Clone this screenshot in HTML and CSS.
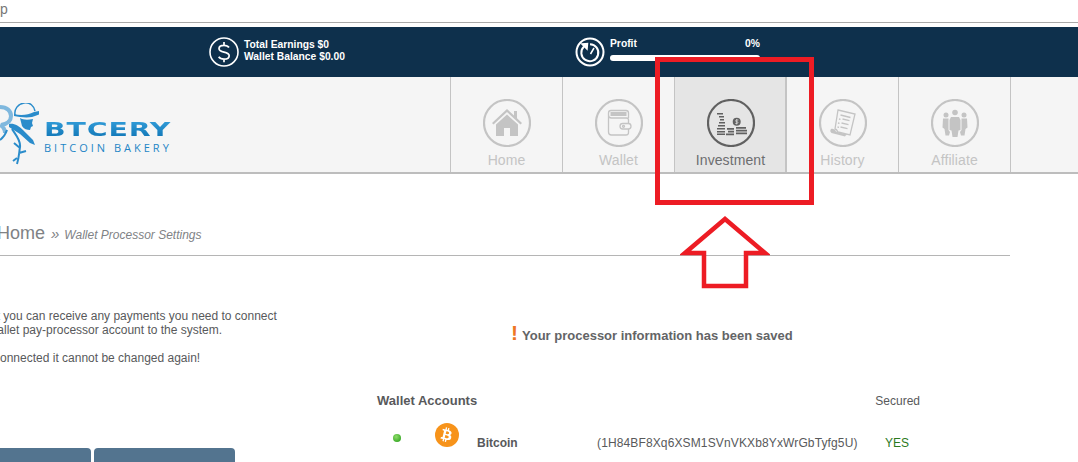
FILE: index.html
```html
<!DOCTYPE html>
<html lang="en">
<head>
<meta charset="utf-8">
<title>Btcery</title>
<link rel="stylesheet" href="styles.css">
</head>
<body>
<div class="urlbar"><span class="urltext">p</span></div>
<div class="statbar">
  <div class="stat stat-money">
    <svg class="stat-ico" viewBox="0 0 30 30"><circle cx="15" cy="15" r="14" fill="none" stroke="#fff" stroke-width="1.6"/><path d="M20 10.500c-1-1.600-2.600-2.200-5-2.200-3 0-5 1.300-5 3.300 0 2.300 2.200 3 5 3.500 2.900.6 5.200 1.300 5.200 3.600 0 2.100-2.100 3.400-5.200 3.400-2.500 0-4.300-.8-5.300-2.300M15 5v3.300M15 22v3.300" fill="none" stroke="#fff" stroke-width="1.700"/></svg>
    <div class="stat-text"><div>Total Earnings $0</div><div>Wallet Balance $0.00</div></div>
  </div>
  <div class="stat stat-profit">
    <svg class="stat-ico" viewBox="0 0 30 30"><circle cx="15" cy="15" r="13.500" fill="none" stroke="#fff" stroke-width="2"/><path d="M9 9.500a8.500 8.500 0 1 0 6-2.300" fill="none" stroke="#fff" stroke-width="2"/><path d="M7 7l5.500-.5-.5 5.500zM15.500 17l3.500-6" fill="#fff" stroke="#fff" stroke-width="1.500"/></svg>
    <div class="profit-body">
      <div class="profit-row"><span>Profit</span><span>0%</span></div>
      <div class="profit-track"></div>
    </div>
  </div>
</div>
<header class="nav">
  <div class="logo">
    <svg class="logo-mark" viewBox="-3 103 42 64">
      <path d="M0 107c7 0 11 4 11 9s-4 8-10 9M0 125c4 2 5 5 5 8" fill="none" stroke="#7fb8de" stroke-width="4"/>
      <path d="M15 115c-1-6 3-11 9-12 6-1 10 3 11 8" fill="none" stroke="#2a8ccb" stroke-width="1.500"/>
      <path d="M14 114c7 2 14 1 20-2l5-1 1 3-5 2-3 1c-6 1-13 0-18-1z" fill="#2a8ccb"/>
      <path d="M20 118c3 2 8 2 13 1l-1 4 1 3-2 1-1 3c-3 0-6-1-8-4z" fill="#2a8ccb"/>
      <path d="M9 124c5-1 10 2 14 6l10 10 2 5-5-2-10-9-11-7z" fill="#2a8ccb"/>
      <path d="M12 129c3 5 9 11 8 18-1 6-1 11-3 17M20 148l-6-5M19 153l7-2M17 158l-4 3M7 130c-1 3-3 7-7 10" fill="none" stroke="#2a8ccb" stroke-width="2"/>
    </svg>
    <div class="logo-text">
      <div class="logo-name">BTCERY</div>
      <div class="logo-sub">BITCOIN BAKERY</div>
    </div>
  </div>
  <nav class="tabs">
    <a class="tab">
      <span class="tab-ico"><svg viewBox="0 0 48 48"><circle cx="24" cy="24" r="23" class="ring"/><path class="fg" d="M24 10L9 24l1.500 1.500L24 13l13.500 12.500L39 24l-5-4.700V12h-3v4.500z"/><path class="fg" d="M24 15.500L13 25.500V37h8v-8h6v8h8V25.500z"/></svg></span>
      <span class="tab-label">Home</span>
    </a>
    <a class="tab">
      <span class="tab-ico"><svg viewBox="0 0 48 48"><circle cx="24" cy="24" r="23" class="ring"/><g fill="none" class="st"><path d="M13.500 14c0-1.500 1-2.500 2.500-2.500h15c1.500 0 2.500 1 2.500 2.500v5M13.500 14v19c0 1.800 1.200 3 3 3h14.500c1.500 0 2.500-1 2.500-2.500V30M13.500 16c0 2 1 3 3 3h15c1.500 0 2 1 2 2v4"/><rect x="25" y="24.500" width="11" height="5.500" rx="2.700"/><circle cx="28.500" cy="27.300" r="1"/></g><rect class="fg" x="15.500" y="13" width="16" height="4"/></svg></span>
      <span class="tab-label">Wallet</span>
    </a>
    <a class="tab tab-active">
      <span class="tab-ico"><svg viewBox="0 0 48 48"><circle cx="24" cy="24" r="23" class="ring"/><path class="fg" d="M10 14h6v1.600h-6zM12 17h5v1.600h-5zM13 20h4v1.600h-4zM12 23h6v1.600h-6zM11 26h7v1.600h-7zM10 29h8v1.600h-8zM10 32h8v1.600h-8zM10 34.500h8v1.600h-8z"/><circle class="fg" cx="29.700" cy="22.700" r="4"/><path class="fg" d="M20 29h7v1.700h-7zM21 31.800h6v1.700h-6zM19 34.500h8v1.700h-8zM29 28h10v1.700H29zM29 30.800h11v1.700H29zM29 33.500h11v1.700H29z"/><path d="M31.400 21h-2c-1 0-1 1.700 0 1.700h.8c1 0 1 1.700 0 1.700h-2M29.700 20v5.500" fill="none" stroke="#e5e5e5" stroke-width=".7"/></svg></span>
      <span class="tab-label">Investment</span>
    </a>
    <a class="tab">
      <span class="tab-ico"><svg viewBox="0 0 48 48"><circle cx="24" cy="24" r="23" class="ring"/><path class="fg" d="M12 30c2-.5 4 .5 5 2.500l13 3.500c-2 0-3-.5-4 1.500L12.500 34C11 33 11 31 12 30z"/><path class="st" fill="none" d="M19 11l17 4-5 21-12-3c-1-2-2-3-3-3z"/><path class="st" fill="none" d="M21.500 16l10 2.500M23.500 20l7 1.700M20 20l1.500.4M22.500 24l7 1.700M19 24l1.500.4M21.500 28l7 1.700M18.500 28l1.500.4"/></svg></span>
      <span class="tab-label">History</span>
    </a>
    <a class="tab">
      <span class="tab-ico"><svg viewBox="0 0 48 48"><circle cx="24" cy="24" r="23" class="ring"/><circle class="fg" cx="24" cy="13.500" r="2.800"/><circle class="fg" cx="15" cy="16" r="2.500"/><circle class="fg" cx="33" cy="16" r="2.500"/><path class="fg" d="M20 18h8l1.500 3v10l-2 .5L26.500 38h-5l-1-6.500-2-.5V21z"/><path class="fg" d="M12 19.500h5.500V31l1.500 2-1 3.500h-3.500L13.500 30l-2-1.500zM36 19.500h-5.500V31L29 33l1 3.500h3.500L34.500 30l2-1.500z"/></svg></span>
      <span class="tab-label">Affiliate</span>
    </a>
  </nav>
</header>
<main class="content">
  <div class="crumb"><span class="crumb-home">Home</span><span class="crumb-sep">»</span><span class="crumb-page">Wallet Processor Settings</span></div>
  <div class="columns">
    <aside class="side">
      <p class="side-p">So that you can receive any payments you need to connect<br>your wallet pay-processor account to the system.</p>
      <p class="side-p">Once connected it cannot be changed again!</p>
      <div class="side-btns"><span class="btn btn-a"></span><span class="btn btn-b"></span></div>
    </aside>
    <section class="main">
      <div class="notice"><span class="bang">!</span>Your processor information has been saved</div>
      <div class="acc-head"><span class="acc-title">Wallet Accounts</span><span class="acc-sec">Secured</span></div>
      <div class="acc-row">
        <span class="dot"></span>
        <svg class="coin" viewBox="0 0 24 24"><circle cx="12" cy="12" r="12" fill="#f7931a"/><path d="M16.600 10.300c.2-1.600-1-2.400-2.600-3l.5-2.100-1.300-.3-.5 2-1-.3.500-2-1.300-.3-.5 2.100-2.600-.6-.3 1.400s.9.200.9.200c.5.100.6.500.6.700l-1.400 5.700c-.1.200-.3.400-.6.300l-1-.2-.6 1.500 2.500.6-.5 2.100 1.300.3.500-2.100 1 .3-.5 2.100 1.300.3.500-2.100c2.200.4 3.900.2 4.600-1.700.6-1.600 0-2.500-1.200-3.100.8-.2 1.500-.8 1.600-1.800zm-2.900 4c-.4 1.600-3.100.7-4 .5l.7-2.900c.9.200 3.700.7 3.300 2.400zm.4-4c-.4 1.500-2.700.7-3.400.5l.7-2.600c.7.200 3.100.5 2.700 2.100z" fill="#fff"/></svg>
        <span class="acc-name">Bitcoin</span>
        <span class="acc-addr">(1H84BF8Xq6XSM1SVnVKXb8YxWrGbTyfg5U)</span>
        <span class="acc-yes">YES</span>
      </div>
    </section>
  </div>
</main>
<div class="mark-box"></div>
<svg class="mark-arrow" viewBox="0 0 90 76"><path d="M45 4L5 38h19v33h42V38h19z" fill="none" stroke="#ed1c24" stroke-width="4.500"/></svg>
</body>
</html>
```
FILE: styles.css
```css
* { box-sizing: border-box; }
html, body { margin: 0; padding: 0; }
body {
  position: relative;
  width: 1078px;
  height: 462px;
  overflow: hidden;
  background: #fff;
  font-family: "Liberation Sans", Arial, sans-serif;
  color: #58595b;
}
.urlbar {
  height: 23px;
  border-bottom: 1px solid #a9a9a9;
  font-size: 14px;
  line-height: 18px;
  color: #777;
  overflow: hidden;
}
.urltext { display: block; }
.statbar {
  margin-top: 4px;
  height: 50px;
  background: #0e304c;
  display: flex;
  align-items: center;
  padding-left: 209px;
  color: #fff;
}
.stat { display: flex; align-items: center; }
.stat-money { width: 366px; }
.stat-ico { width: 30px; height: 30px; flex: none; }
.stat-text {
  margin-left: 5px;
  padding-bottom: 2px;
  font-size: 10.300px;
  font-weight: bold;
  line-height: 12px;
}
.profit-body { margin-left: 5px; width: 150px; padding-bottom: 5px; }
.profit-row {
  display: flex;
  justify-content: space-between;
  font-size: 10.300px;
  font-weight: bold;
  line-height: 12px;
  margin-bottom: 5px;
}
.profit-track { height: 6px; border-radius: 3px; background: #fff; }
.nav {
  height: 97px;
  background: #f5f5f5;
  border-bottom: 2px solid #bdbdbd;
  display: flex;
  justify-content: space-between;
}
.logo { display: flex; align-items: flex-start; margin-left: -3px; padding-top: 24px; }
.logo-mark { width: 42px; height: 64px; flex: none; margin-top: 2px; }
.logo-text { margin-left: 5px; padding-top: 18px; }
.logo-name {
  font-family: "DejaVu Sans", sans-serif;
  font-weight: bold;
  font-size: 20px;
  line-height: 20px;
  letter-spacing: .6px;
  background: linear-gradient(#35a0dc, #0f74b4);
  -webkit-background-clip: text;
  background-clip: text;
  color: transparent;
  transform: scaleX(1.42);
  transform-origin: left center;
  width: 92px;
}
.logo-sub {
  margin-top: 3px;
  font-family: "Open Sans", sans-serif;
  font-size: 11px;
  line-height: 12px;
  letter-spacing: 3px;
  color: #1f86c6;
  white-space: nowrap;
}
.tabs { display: flex; width: 628px; }
.tab {
  width: 112px;
  height: 95px;
  border-left: 1px solid #c4c4c4;
  display: flex;
  flex-direction: column;
  align-items: center;
  padding-top: 22px;
  color: #c4c4c4;
}
.tab:last-child { width: 113px; border-right: 1px solid #c4c4c4; }
.tab-active { background: #e5e5e5; color: #6d6e70; border-right: 1px solid #c4c4c4; padding-left: 1px; }
.tab-ico { width: 48px; height: 48px; display: block; }
.tab-ico svg { width: 48px; height: 48px; display: block; }
.ring { fill: none; stroke: #c4c4c4; stroke-width: 2.200; }
.fg { fill: #c4c4c4; }
.st { stroke: #c4c4c4; stroke-width: 1.300; }
.tab-active .ring { stroke: #616161; }
.tab-active .fg { fill: #616161; }
.tab-label { font-size: 14px; line-height: 16px; margin-top: 5px; letter-spacing: .1px; }
.content { width: 1010px; }
.crumb {
  height: 82px;
  padding-top: 48px;
  border-bottom: 1px solid #b5b5b5;
  margin-left: -3px;
  display: flex;
  align-items: baseline;
  color: #808285;
}
.crumb-home { font-size: 18px; line-height: 22px; }
.crumb-sep { font-size: 15px; margin: 0 5px 0 6px; font-style: italic; }
.crumb-page { font-size: 12px; font-style: italic; }
.columns { display: flex; }
.side { width: 415px; margin-left: -38px; flex: none; padding-top: 53px; font-size: 12px; line-height: 14px; }
.side-p { margin: 0 0 14px; }
.main { flex: 1; }
.notice {
  padding-left: 134px;
  margin-top: 69px;
  font-size: 13px;
  font-weight: bold;
  line-height: 16px;
  color: #636466;
}
.bang { font-size: 21px; color: #ee7623; margin-right: 4px; line-height: 16px; }
.acc-head {
  display: flex;
  justify-content: space-between;
  width: 543px;
  margin-top: 49px;
  line-height: 16px;
  font-size: 12px;
}
.acc-title { font-size: 13px; font-weight: bold; }
.acc-row { display: flex; align-items: center; margin-top: 16px; height: 30px; font-size: 12px; }
.dot { width: 8px; height: 8px; border-radius: 50%; background: radial-gradient(circle at 40% 35%, #8fdc6a, #1f9a12); margin-left: 16px; margin-top: -4px; }
.coin { width: 24px; height: 24px; margin-left: 34px; margin-top: -10px; flex: none; }
.acc-name { font-weight: bold; margin-left: 18px; margin-top: 6px; width: 120px; }
.acc-addr { letter-spacing: .13px; margin-top: 6px; width: 288px; white-space: nowrap; }
.acc-yes { color: #2c7a1d; margin-top: 6px; }
.side-btns { display: flex; gap: 3px; margin-top: 83px; margin-left: -29px; }
.btn { height: 30px; background: #53748f; border-radius: 4px 4px 0 0; display: block; flex: none; }
.btn-a { width: 158px; }
.btn-b { width: 141px; }
.mark-box {
  position: absolute;
  left: 655px;
  top: 57px;
  width: 159px;
  height: 148px;
  border: 5px solid #ed1c24;
}
.mark-arrow {
  position: absolute;
  left: 680px;
  top: 215px;
  width: 90px;
  height: 76px;
}
```
